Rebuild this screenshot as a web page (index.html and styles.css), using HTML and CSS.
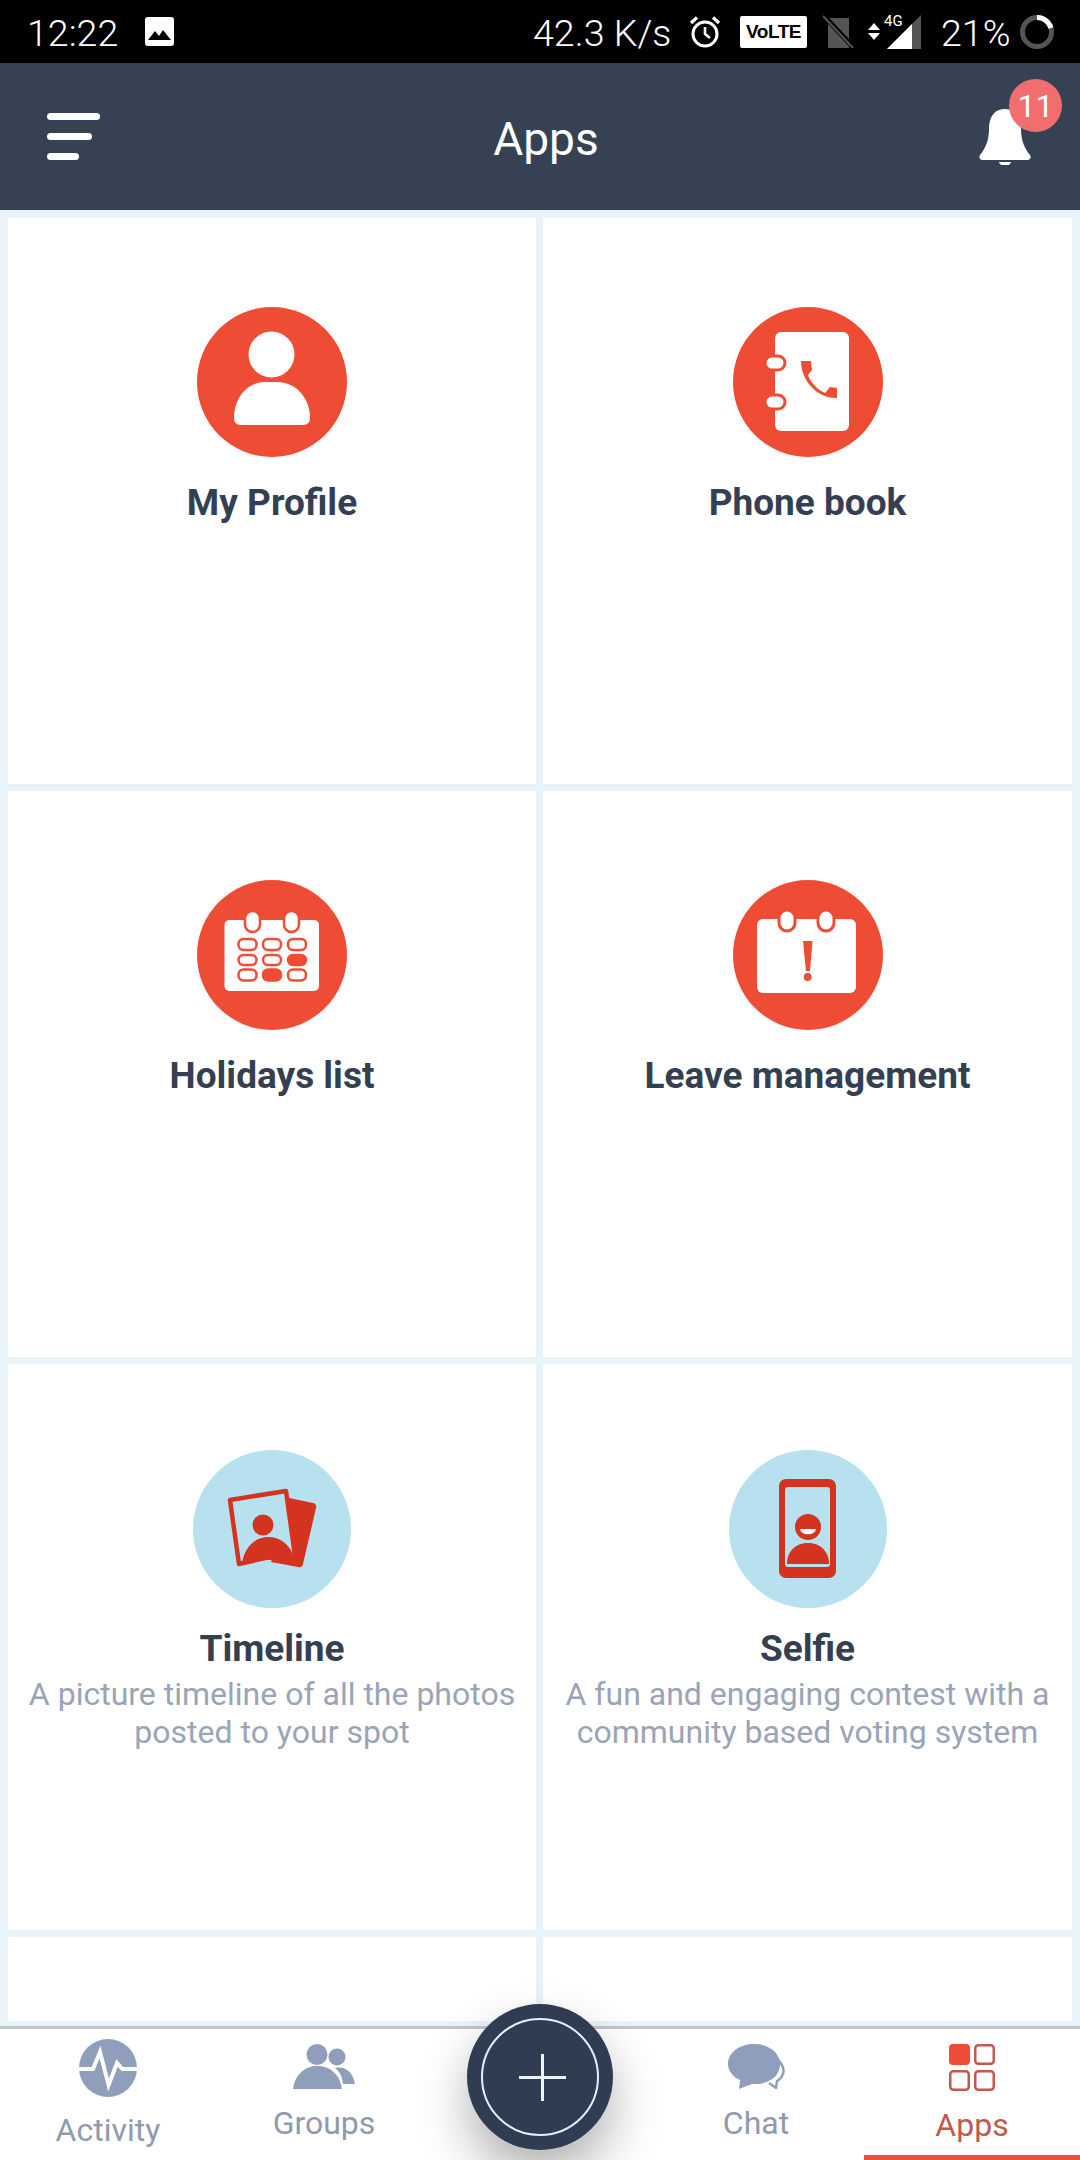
FILE: index.html
```html
<!DOCTYPE html>
<html lang="en">
<head>
<meta charset="utf-8">
<title>Apps</title>
<link rel="stylesheet" href="styles.css">
</head>
<body>
<div class="phone">
  <div class="status">
    <div class="status-left">
      <span class="time">12:22</span>
      <svg class="st-image" viewBox="0 0 29 29"><rect width="29" height="29" rx="3" fill="#fff"/><path d="M3 23 L10 14 L14 19 L18 13 L26 23Z" fill="#000"/></svg>
    </div>
    <div class="status-right">
      <span class="speed">42.3 K/s</span>
      <svg class="st-alarm" viewBox="0 0 32 33" fill="none" stroke="#fff"><circle cx="16" cy="19" r="12" stroke-width="3"/><path d="M16 12 V19 L21 23" stroke-width="2.6"/><path d="M2 8 L8 2.5 M30 8 L24 2.5" stroke-width="3.2"/></svg>
      <span class="volte">VoLTE</span>
      <svg class="st-sim" viewBox="0 0 32 33"><path d="M5 3 H26 V33 H5Z" fill="#555"/><path d="M1 1 L30 32" stroke="#000" stroke-width="5"/><path d="M0 1 L30 33" stroke="#555" stroke-width="2"/></svg>
      <svg class="st-arrows" viewBox="0 0 12 17"><path d="M6 0 L12 7 H0Z M6 17 L0 10 H12Z" fill="#fff"/></svg>
      <div class="signal">
        <span class="net">4G</span>
        <svg class="st-signal" viewBox="0 0 34 34"><path d="M34 0 V34 H0Z" fill="#555"/><path d="M25 9 V34 H0Z" fill="#fff"/></svg>
      </div>
      <span class="battery">21%</span>
      <svg class="st-ring" viewBox="0 0 34 34" fill="none" stroke-width="5"><circle cx="17" cy="17" r="14.5" stroke="#555"/><path d="M17 2.5 A14.5 14.5 0 0 1 31 13" stroke="#fff"/></svg>
    </div>
  </div>

  <header class="appbar">
    <div class="menu"><i class="m1"></i><i class="m2"></i><i class="m3"></i></div>
    <h1 class="title">Apps</h1>
    <div class="bell">
      <svg class="bell-icon" viewBox="0 0 52 56"><path d="M26 0 C14 0 10 10 10 20 C10 32 6 40 1 46 Q-1 50 3 51 H49 Q53 50 51 46 C46 40 42 32 42 20 C42 10 38 0 26 0Z" fill="#fff"/><path d="M20 53 H32 C31 58 21 58 20 53Z" fill="#fff"/></svg>
      <span class="badge">11</span>
    </div>
  </header>

  <main class="content">
    <div class="grid">
      <section class="card">
        <svg class="ico ico-red" viewBox="0 0 150 150"><circle cx="75" cy="75" r="75" fill="#ee4c35"/><circle cx="74.5" cy="47.5" r="23" fill="#fff"/><path d="M37 111 C37 90 51 75 68 75 H80 C98 75 113 90 113 111 Q113 118 106 118 H44 Q37 118 37 111Z" fill="#fff"/></svg>
        <h2 class="name">My Profile</h2>
      </section>
      <section class="card">
        <svg class="ico ico-red" viewBox="0 0 150 150"><circle cx="75" cy="75" r="75" fill="#ee4c35"/><rect x="42" y="25" width="74" height="99" rx="6" fill="#fff"/><rect x="32" y="49" width="20" height="14" rx="7" fill="#fff" stroke="#ee4c35" stroke-width="3"/><rect x="32" y="88" width="20" height="14" rx="7" fill="#fff" stroke="#ee4c35" stroke-width="3"/><path d="M68 54 H78 L79 63 L75 68 C78 76 84 82 92 86 L97 80 L104 81 V91 C85 92 68 74 68 54Z" fill="#ee4c35"/></svg>
        <h2 class="name">Phone book</h2>
      </section>
      <section class="card">
        <svg class="ico ico-red" viewBox="0 0 150 150"><circle cx="75" cy="75" r="75" fill="#ee4c35"/><rect x="27.500" y="40" width="94.500" height="71" rx="5" fill="#fff"/><g fill="#fff" stroke="#ee4c35" stroke-width="2.500"><rect x="48" y="31" width="15" height="21" rx="7.500"/><rect x="87" y="31" width="15" height="21" rx="7.500"/><rect x="41.500" y="59" width="18" height="11" rx="5"/><rect x="66" y="59" width="18" height="11" rx="5"/><rect x="91" y="59" width="18" height="11" rx="5"/><rect x="41.500" y="75" width="18" height="10" rx="5"/><rect x="66" y="75" width="18" height="10" rx="5"/><rect x="91" y="75" width="18" height="10" rx="5" fill="#ee4c35"/><rect x="41.500" y="89.500" width="18" height="11" rx="5"/><rect x="66" y="89.500" width="18" height="11" rx="5" fill="#ee4c35"/><rect x="91" y="89.500" width="18" height="11" rx="5"/></g></svg>
        <h2 class="name">Holidays list</h2>
      </section>
      <section class="card">
        <svg class="ico ico-red" viewBox="0 0 150 150"><circle cx="75" cy="75" r="75" fill="#ee4c35"/><rect x="24" y="39" width="99" height="74" rx="6" fill="#fff"/><g fill="#fff" stroke="#ee4c35" stroke-width="3"><rect x="46" y="30" width="16" height="21" rx="8"/><rect x="85" y="30" width="16" height="21" rx="8"/></g><path d="M70 61 H79.500 L77 91 H73Z" fill="#ee4c35"/><circle cx="74.700" cy="97" r="4" fill="#ee4c35"/></svg>
        <h2 class="name">Leave management</h2>
      </section>
      <section class="card card-desc">
        <svg class="ico ico-blue" viewBox="0 0 158 158"><circle cx="79" cy="79" r="79" fill="#b8e1ef"/><path d="M96 48 L120 53 Q124 54 123 58 L110 114 Q109 118 105 117 L78 112Z" fill="#d3331f"/><path d="M37 50 L93 41 L102 106 L72 108 L46 114Z" fill="#b8e1ef" stroke="#d3331f" stroke-width="4.500" stroke-linejoin="round"/><circle cx="70" cy="75" r="10.500" fill="#d3331f"/><path d="M49 113 C52 96 63 87 75 87 C88 87 97 95 101 107 L72 108Z" fill="#d3331f"/></svg>
        <h2 class="name">Timeline</h2>
        <p class="desc">A picture timeline of all the photos posted to your spot</p>
      </section>
      <section class="card card-desc">
        <svg class="ico ico-blue" viewBox="0 0 158 158"><circle cx="79" cy="79" r="79" fill="#b8e1ef"/><rect x="50" y="29" width="57" height="99" rx="7" fill="#d3331f"/><rect x="56" y="37" width="45" height="80" rx="3" fill="#b8e1ef"/><circle cx="79" cy="77" r="13" fill="#d3331f"/><path d="M71 79 H87 C86 86 72 86 71 79Z" fill="#fff"/><path d="M58 114 C58 100 68 93 79 93 C90 93 100 100 100 114Z" fill="#d3331f"/></svg>
        <h2 class="name">Selfie</h2>
        <p class="desc">A fun and engaging contest with a community based voting system</p>
      </section>
      <section class="card"></section>
      <section class="card"></section>
    </div>
  </main>

  <nav class="tabs">
    <a class="tab tab-activity">
      <svg class="t-activity" viewBox="0 0 58 58"><circle cx="29" cy="29" r="29" fill="#8f9fbb"/><path d="M0 30 H14 L21 13 L29.600 46 L38 24 L43.400 30 H58" fill="none" stroke="#fff" stroke-width="4"/></svg>
      <span class="tab-label">Activity</span>
    </a>
    <a class="tab">
      <svg class="t-groups" viewBox="0 0 62 45"><circle cx="44" cy="13" r="8.500" fill="#8f9fbb"/><path d="M42 24 C52 22 60 28 62 40 H50 C49 32 47 28 42 24Z" fill="#8f9fbb"/><circle cx="24" cy="10.500" r="10.500" fill="#8f9fbb"/><path d="M0 45 C2 30 12 22 24 22 C37 22 47 30 49 45Z" fill="#8f9fbb"/></svg>
      <span class="tab-label">Groups</span>
    </a>
    <div class="tab-gap"></div>
    <a class="tab">
      <svg class="t-chat" viewBox="0 0 57 45"><path d="M50 16 C57 23 58 31 49 37 L48 44 L41 39" fill="none" stroke="#8f9fbb" stroke-width="2.500"/><path d="M26 0 C12 0 0 8 0 20 C0 27 5 33 12 36 L11 45 L24 40 C40 41 52 33 52 20 C52 8 40 0 26 0Z" fill="#8f9fbb"/></svg>
      <span class="tab-label">Chat</span>
    </a>
    <a class="tab tab-active">
      <svg class="t-apps" viewBox="0 0 46 47"><rect width="21" height="21" rx="4" fill="#ee4c35"/><g fill="none" stroke="#c0594e" stroke-width="2.500"><rect x="26.250" y="1.250" width="18.500" height="18.500" rx="3"/><rect x="1.250" y="27.250" width="18.500" height="18.500" rx="3"/><rect x="26.250" y="27.250" width="18.500" height="18.500" rx="3"/></g></svg>
      <span class="tab-label">Apps</span>
    </a>
    <button class="fab" aria-label="Add"><span class="fab-ring"><svg class="fab-plus" viewBox="0 0 47 47"><path d="M23.500 0 V47 M0 23.500 H47" stroke="#e8f6fb" stroke-width="3"/></svg></span></button>
  </nav>
</div>
</body>
</html>
```
FILE: styles.css
```css
* { box-sizing: border-box; }
html, body { margin: 0; padding: 0; }
body { font-family: Roboto, "Liberation Sans", sans-serif; background: #e9f3fa; }
.phone { width: 1080px; height: 2160px; display: flex; flex-direction: column; overflow: hidden; }

.status { height: 63px; background: #000; color: #fff; display: flex; justify-content: space-between; align-items: center; padding: 0 26px 0 27px; flex: none; font-size: 37.600px; font-weight: 300; }
.status-left, .status-right { display: flex; align-items: center; }
.time { width: 118px; padding-top: 2px; }
.st-image { width: 29px; height: 29px; }
.speed { width: 137px; padding-top: 2px; white-space: nowrap; }
.st-alarm { width: 32px; height: 33px; margin-left: 19px; }
.volte { width: 67px; height: 32px; margin-left: 19px; background: #fff; color: #000; border-radius: 2px; font: 700 19px/32px "Liberation Sans", sans-serif; text-align: center; letter-spacing: -0.500px; }
.st-sim { width: 32px; height: 33px; margin-left: 16px; }
.st-arrows { width: 12px; height: 17px; margin-left: 13px; }
.signal { position: relative; width: 34px; height: 34px; margin-left: 7px; }
.st-signal { display: block; width: 34px; height: 34px; }
.net { position: absolute; top: -3px; left: -3px; font: 400 15px/18px Roboto, sans-serif; color: #fff; }
.battery { width: 67px; margin-left: 20px; padding-top: 2px; white-space: nowrap; }
.st-ring { width: 34px; height: 34px; margin-left: 12px; }

.appbar { height: 147px; flex: none; background: #364154; display: flex; align-items: center; justify-content: space-between; padding: 0 18px 0 47px; position: relative; }
.menu { display: flex; flex-direction: column; gap: 13px; }
.menu i { display: block; height: 7px; background: #fff; border-radius: 4px; }
.m1 { width: 53px; }
.m2 { width: 45px; }
.m3 { width: 32px; }
.title { position: absolute; left: 0; right: 0; top: 0; margin: 0; padding-left: 12px; text-align: center; font-size: 46px; font-weight: 400; line-height: 153px; color: #fff; }
.bell { position: relative; width: 83px; height: 86px; margin-bottom: 29px; }
.bell-icon { position: absolute; left: 0; top: 30px; width: 52px; height: 56px; }
.badge { position: absolute; left: 30px; top: 0; width: 53px; height: 53px; border-radius: 50%; background: #f26d6d; color: #fff; font-size: 32px; line-height: 54px; text-align: center; }

.content { flex: 1; min-height: 0; padding: 8px 8px 5px; display: flex; }
.grid { flex: 1; display: grid; grid-template-columns: 528px 529px; grid-auto-rows: 566px; gap: 7px; overflow: hidden; }
.card { background: #fff; display: flex; flex-direction: column; align-items: center; padding: 89px 12px 0; text-align: center; }
.card-desc { padding-top: 86px; }
.ico { display: block; flex: none; }
.ico-red { width: 150px; height: 150px; }
.ico-blue { width: 158px; height: 158px; }
.name { margin: 23px 0 0; font-size: 37px; line-height: 46px; font-weight: 700; color: #343f52; }
.card-desc .name { margin-top: 18px; }
.desc { margin: 3px 0 0; font-size: 32px; line-height: 38px; font-weight: 400; color: #9aa4b6; }

.tabs { position: relative; height: 134px; flex: none; border-top: 3px solid #c3c6ca; background: #fff; display: grid; grid-template-columns: repeat(5, 1fr); }
.tab { display: flex; flex-direction: column; align-items: center; color: #8f9aae; font-size: 32px; line-height: 40px; padding-top: 15px; position: relative; }
.tab-label { margin-top: 14px; }
.tab-activity { padding-top: 10px; }
.tab-activity .tab-label { margin-top: 13px; }
.t-activity { width: 58px; height: 58px; }
.t-groups { width: 62px; height: 45px; }
.t-chat { width: 57px; height: 45px; }
.t-apps { width: 46px; height: 47px; }
.tab-active { color: #c0594e; border-bottom: 5px solid #e9503a; }
.fab { position: absolute; left: 467px; top: -25px; width: 146px; height: 146px; border: 0; padding: 0; border-radius: 50%; background: #2f3c51; box-shadow: 0 26px 50px rgba(0,0,0,.3); display: flex; align-items: center; justify-content: center; }
.fab-ring { width: 118px; height: 118px; border: 2px solid #dff3fa; border-radius: 50%; display: flex; align-items: center; justify-content: center; padding-left: 4px; }
.fab-plus { width: 47px; height: 47px; }
```
